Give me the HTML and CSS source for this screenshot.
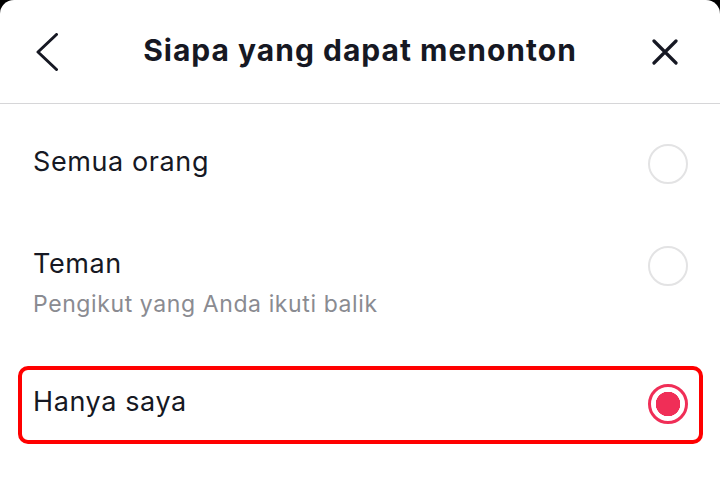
FILE: index.html
```html
<!DOCTYPE html>
<html lang="id">
<head>
<meta charset="utf-8">
<title>Siapa yang dapat menonton</title>
<link rel="stylesheet" href="styles.css">
</head>
<body>
<div class="sheet">
  <header class="header">
    <button class="icon-btn back" aria-label="Kembali">
      <svg width="24" height="38" viewBox="0 0 24 38"><polyline points="21.5,1.5 3,19 21.5,36.5" fill="none" stroke="#161823" stroke-width="3" stroke-linecap="round" stroke-linejoin="round"/></svg>
    </button>
    <h1 class="title">Siapa yang dapat menonton</h1>
    <button class="icon-btn close" aria-label="Tutup">
      <svg width="26" height="26" viewBox="0 0 26 26"><path d="M2 2 L24 24 M24 2 L2 24" fill="none" stroke="#161823" stroke-width="3.2" stroke-linecap="round"/></svg>
    </button>
  </header>
  <ul class="options">
    <li class="option">
      <div class="option-text"><div class="option-title">Semua orang</div></div>
      <span class="radio"></span>
    </li>
    <li class="option">
      <div class="option-text">
        <div class="option-title">Teman</div>
        <div class="option-sub">Pengikut yang Anda ikuti balik</div>
      </div>
      <span class="radio"></span>
    </li>
    <li class="option selected">
      <div class="option-text"><div class="option-title">Hanya saya</div></div>
      <span class="radio checked"></span>
      <span class="highlight"></span>
    </li>
  </ul>
</div>
</body>
</html>
```
FILE: styles.css
```css
html, body {
  margin: 0;
  padding: 0;
  background: #000;
  height: 100%;
}
body {
  font-family: "Inter", "Liberation Sans", sans-serif;
  color: #161823;
}
.sheet {
  background: #fff;
  border-radius: 14px 14px 0 0;
  min-height: 501px;
  overflow: hidden;
}
.header {
  height: 103px;
  border-bottom: 1px solid #d6d6d8;
  display: flex;
  align-items: center;
  padding: 0 42px 0 34px;
  box-sizing: content-box;
}
.icon-btn {
  background: none;
  border: 0;
  padding: 0;
  display: flex;
  align-items: center;
  justify-content: center;
}
.back { width: 26px; margin-top: 1px; }
.close { width: 26px; margin-top: 1px; }
.title {
  flex: 1;
  text-align: center;
  margin: 0;
  padding-left: 8px;
  font-size: 30px;
  font-weight: 700;
  letter-spacing: 1px;
  line-height: 40px;
  margin-top: -4px;
}
.options {
  list-style: none;
  margin: 0;
  padding: 7px 0 0;
}
.option {
  position: relative;
  display: flex;
  align-items: flex-start;
  padding: 29px 32px 29px 33px;
}
.option-text {
  flex: 1;
  margin-top: 2px;
  margin-bottom: -2px;
}
.option-title {
  font-size: 27px;
  letter-spacing: 0.6px;
  line-height: 40px;
}
.option-sub {
  font-size: 23px;
  letter-spacing: 0.6px;
  line-height: 40px;
  color: #8a8b91;
}
.radio {
  width: 40px;
  height: 40px;
  margin-top: 4px;
  box-sizing: border-box;
  border-radius: 50%;
  border: 2.5px solid #e3e3e4;
  flex: none;
}
.radio.checked {
  border: 3px solid #f02e57;
  background: radial-gradient(circle, #f02e57 0 12px, #fff 12.5px);
}
.highlight {
  position: absolute;
  left: 18px;
  right: 17px;
  top: 15px;
  bottom: 9px;
  border: 4px solid #ff0000;
  border-radius: 10px;
  pointer-events: none;
}
```
